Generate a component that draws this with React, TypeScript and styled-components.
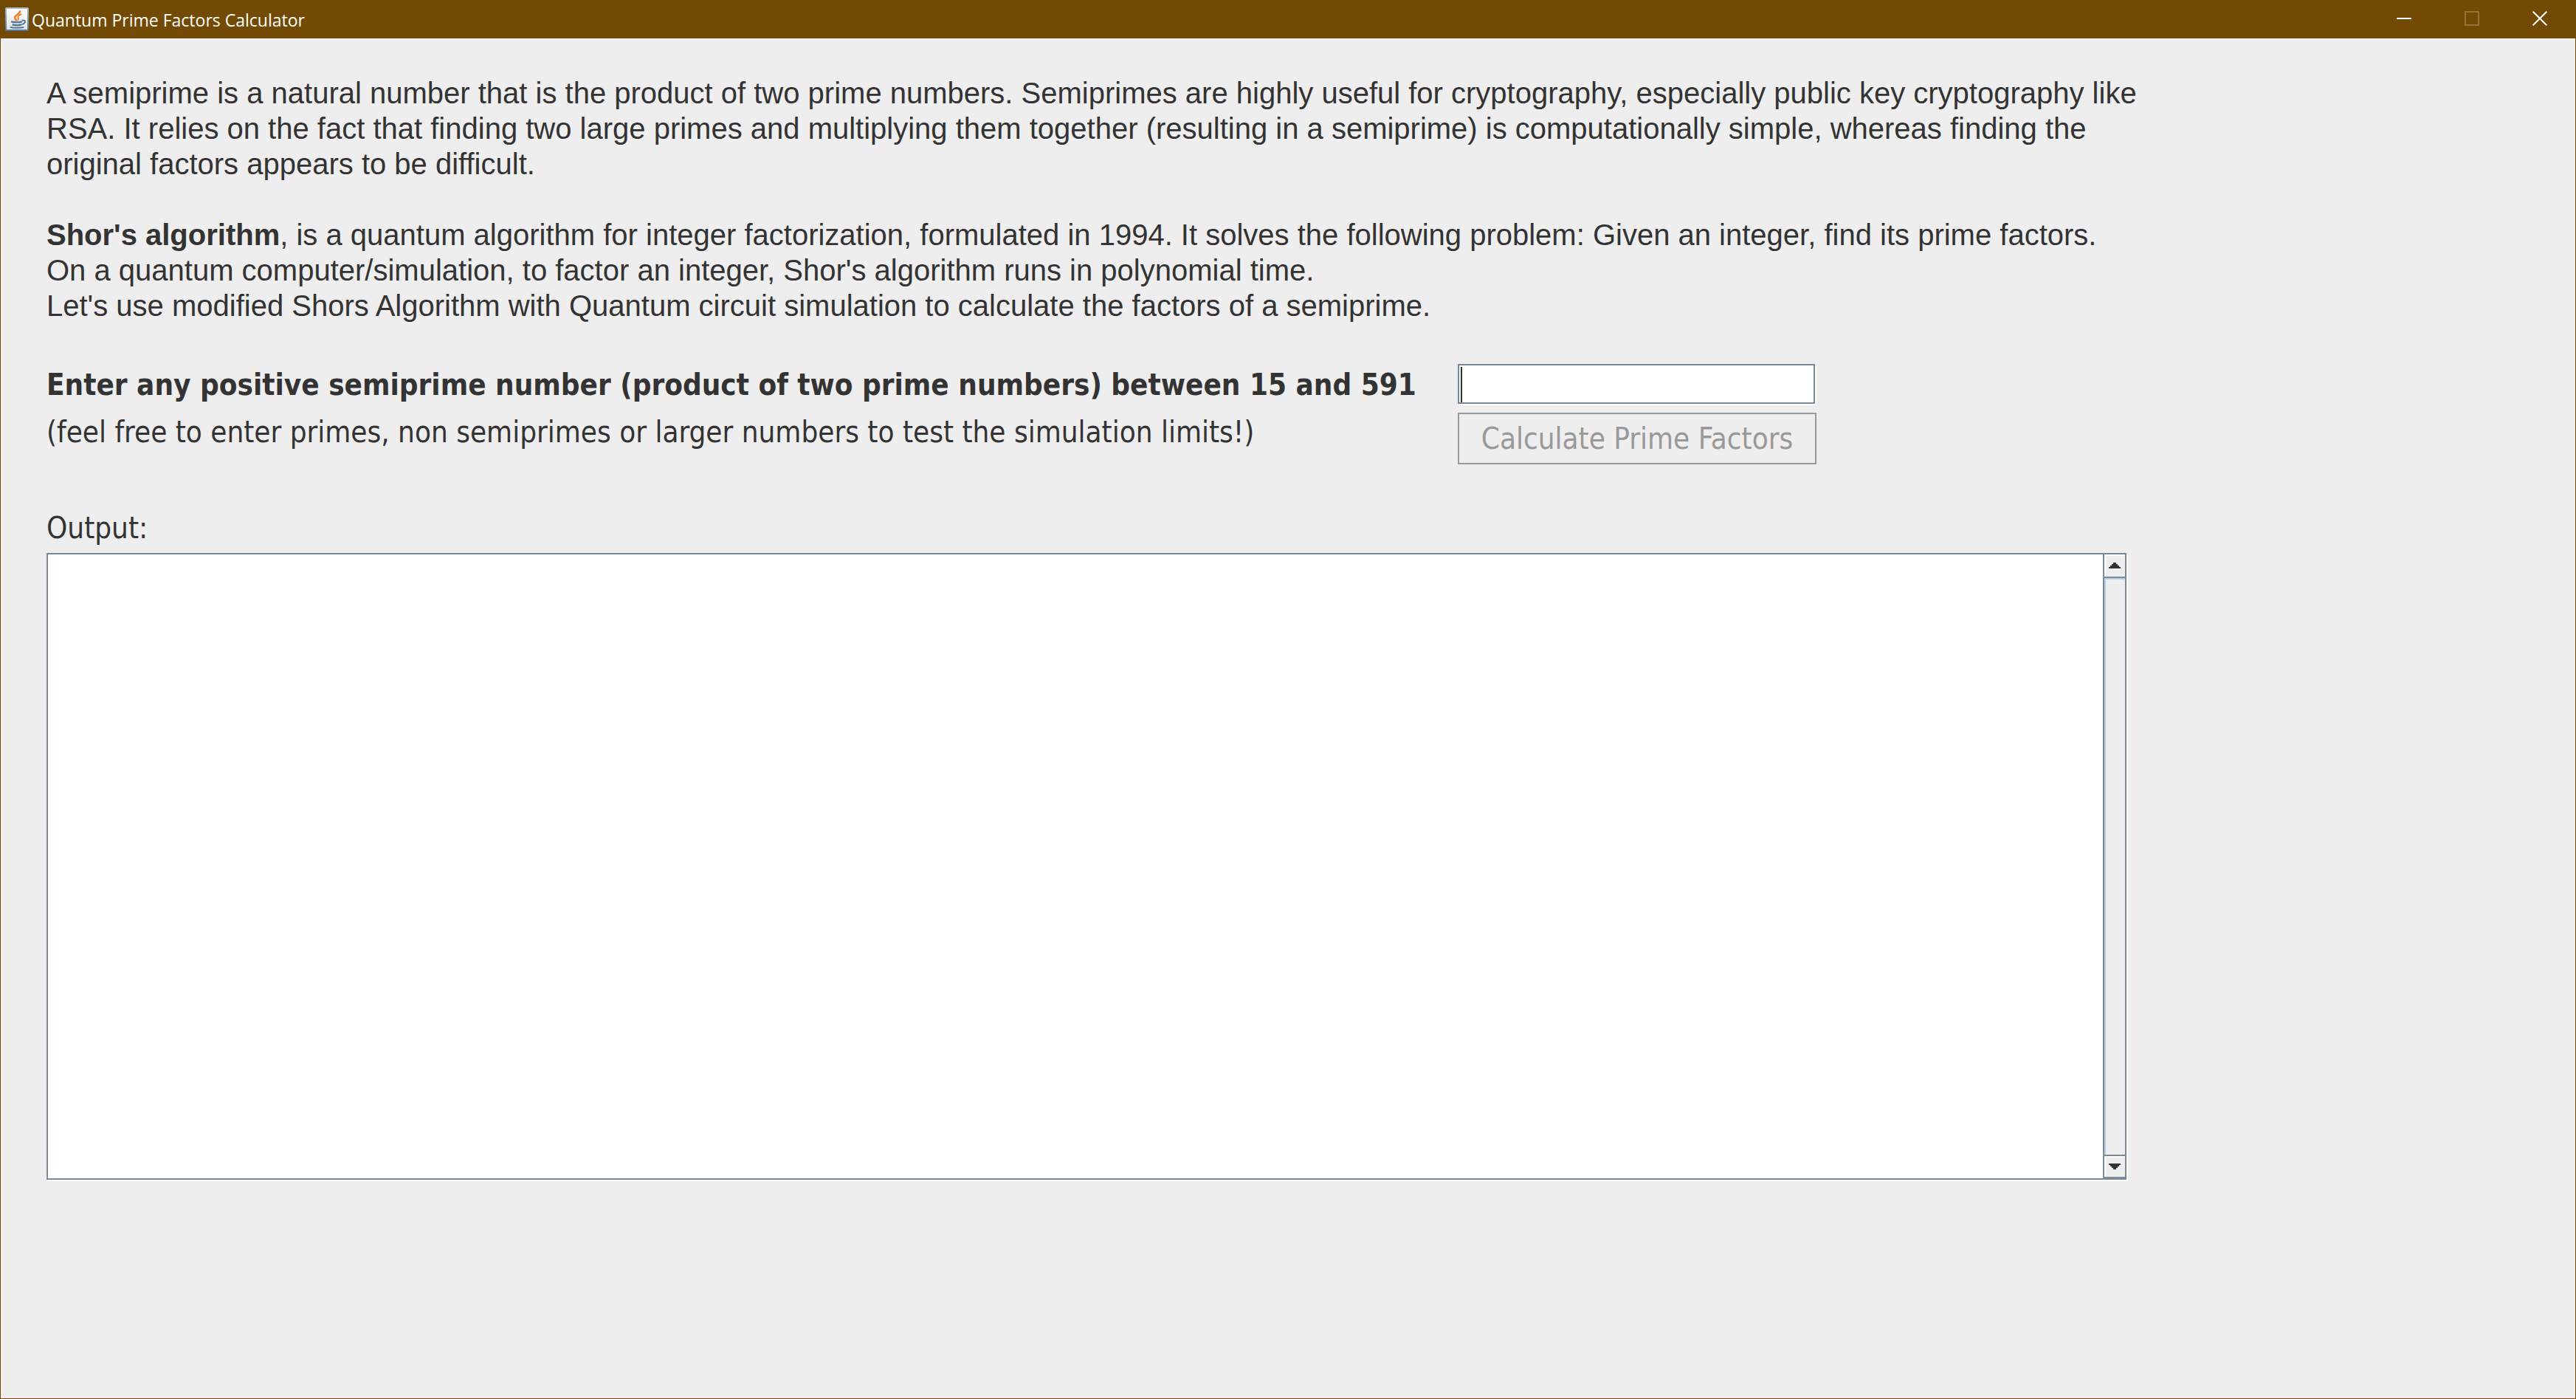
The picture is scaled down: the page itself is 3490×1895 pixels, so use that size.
import React, { useState } from "react";
import styled, { createGlobalStyle } from "styled-components";

const colors = {
  title: "#734a03",
  panel: "#eeeeee",
  text: "#333333",
  disabled: "#999999",
  border: "#7a8a99",
  light: "#b8cfe5",
};

const GlobalStyle = createGlobalStyle`
  *, *::before, *::after { box-sizing: border-box; }
  body { margin: 0; background: ${colors.panel}; }
`;

const Window = styled.div`
  display: flex;
  flex-direction: column;
  min-height: 100vh;
  border: 1px solid ${colors.title};
  border-top: 0;
  background: ${colors.panel};
  color: ${colors.text};
  font-family: "DejaVu Sans Condensed", "DejaVu Sans", sans-serif;
  font-size: 40px;
`;

const TitleBar = styled.header`
  display: flex;
  align-items: center;
  height: 52px;
  padding: 0 2px 0 6px;
  background: ${colors.title};
  color: #ffffff;
`;

const AppIcon = styled.svg`
  width: 32px;
  height: 32px;
  flex: none;
`;

const Title = styled.h1`
  flex: 1;
  margin: 0;
  padding: 2px 0 0 4px;
  font-family: "Open Sans", "Noto Sans", sans-serif;
  font-size: 23px;
  font-weight: 400;
  line-height: 32px;
`;

const WindowButton = styled.button`
  display: grid;
  place-items: center;
  width: 92px;
  height: 50px;
  margin-bottom: 2px;
  padding: 0;
  border: 0;
  background: transparent;
  color: #ffffff;

  &:disabled { color: #94713a; }
  svg { display: block; width: 20px; height: 20px; fill: none; stroke: currentColor; stroke-width: 2; }
`;

const Content = styled.main`
  display: flex;
  flex: 1;
  flex-direction: column;
  width: 100%;
  padding: 50px 62px 296px;
`;

const Intro = styled.section`
  font-family: "Liberation Sans", Arial, sans-serif;
  line-height: 48px;
`;

const Paragraph = styled.p`
  margin: 0 0 48px;
`;

const EntryForm = styled.form`
  display: grid;
  grid-template-columns: 1912px 486px;
  align-items: start;
  row-gap: 10px;
  margin-top: 7px;
`;

const PromptLabel = styled.label`
  font-weight: 700;
  line-height: 56px;
`;

const Hint = styled.p`
  margin: 0;
  line-height: 52px;
`;

const NumberInput = styled.input`
  width: 484px;
  height: 54px;
  padding: 0 4px;
  border: 2px solid ${colors.border};
  border-radius: 0;
  outline: 0;
  background: linear-gradient(${colors.text}, ${colors.text}) 2px 2px / 2px 48px no-repeat #ffffff;
  box-shadow: 2px 2px 0 #ffffff;
  color: ${colors.text};
  font: inherit;

  &:not(:placeholder-shown) { background: #ffffff; }
`;

const CalculateButton = styled.button`
  width: 486px;
  height: 70px;
  padding: 0;
  border: 2px solid ${colors.border};
  border-radius: 0;
  background: ${colors.panel};
  color: ${colors.text};
  font: inherit;
  line-height: 66px;

  &:disabled { border-color: ${colors.disabled}; color: ${colors.disabled}; }
`;

const OutputLabel = styled.label`
  margin-top: 58px;
  line-height: 56px;
`;

const ScrollPane = styled.div`
  display: flex;
  flex: 1;
  width: 100%;
  max-width: 2818px;
  min-height: 240px;
  margin-top: 6px;
  border: 2px solid ${colors.border};
  box-shadow: 2px 2px 0 #ffffff;
`;

const OutputArea = styled.textarea`
  flex: 1;
  min-width: 0;
  padding: 4px;
  border: 0;
  outline: 0;
  resize: none;
  overflow: hidden;
  background: #ffffff;
  color: ${colors.text};
  font: inherit;
`;

const ScrollBar = styled.div`
  display: flex;
  flex-direction: column;
  width: 30px;
  border-left: 2px solid ${colors.border};
`;

const ScrollTrack = styled.div`
  flex: 1;
  border-top: 2px solid ${colors.light};
  border-left: 2px solid ${colors.light};
`;

const ArrowButton = styled.button<{ $end?: boolean }>`
  display: grid;
  place-items: center;
  width: 28px;
  height: 32px;
  padding: 0;
  border: 0 solid ${colors.border};
  border-width: ${(p) => (p.$end ? "2px 0" : "0 0 2px")};
  background: ${colors.panel};
  box-shadow: inset 2px 2px 0 #ffffff;

  svg { display: block; width: 16px; height: 8px; fill: ${colors.text}; }
`;

function JavaIcon() {
  return (
    <AppIcon viewBox="0 0 32 32" aria-hidden="true">
      <defs>
        <linearGradient id="plate" x1="0" y1="0" x2="0" y2="1">
          <stop offset="0" stopColor="#ffffff" />
          <stop offset="1" stopColor="#e2e2e2" />
        </linearGradient>
        <linearGradient id="rim" x1="0" y1="0" x2="0" y2="1">
          <stop offset="0" stopColor="#a9bac6" />
          <stop offset="1" stopColor="#54779a" />
        </linearGradient>
      </defs>
      <rect x="1" y="1" width="30" height="30" rx="1" fill="url(#plate)" stroke="url(#rim)" strokeWidth="2" />
      <g fill="none" strokeLinecap="round">
        <path d="M20 5.500c0 3.500-7 5-7 8.500 0 1.500 1.500 2 2 3.500" stroke="#e8832f" strokeWidth="2.600" />
        <path d="M21.500 9.500c-3 1-4.500 2.500-4 4s1 2-.2 3.500" stroke="#e8832f" strokeWidth="2" />
        <path d="M9 19.500c3 .6 10 .6 13 0M10.500 23.500c3 .8 8 .8 10.500 0" stroke="#53789a" strokeWidth="2.400" />
        <path d="M23.500 17.500c5-.5 4.500 4-.5 5.500" stroke="#53789a" strokeWidth="2" />
        <path d="M7.500 27c4 1 13 1 17 0" stroke="#53789a" strokeWidth="2" />
      </g>
    </AppIcon>
  );
}

export default function App() {
  const [value, setValue] = useState("");

  return (
    <>
      <GlobalStyle />
      <Window>
        <TitleBar>
          <JavaIcon />
          <Title>Quantum Prime Factors Calculator</Title>
          <WindowButton type="button" aria-label="Minimize">
            <svg viewBox="0 0 20 20"><path d="M0 10h20" /></svg>
          </WindowButton>
          <WindowButton type="button" aria-label="Maximize" disabled>
            <svg viewBox="0 0 20 20"><path d="M1 1h18v18H1z" /></svg>
          </WindowButton>
          <WindowButton type="button" aria-label="Close">
            <svg viewBox="0 0 20 20"><path d="M.7.7l18.600 18.600M19.300.7L.7 19.300" /></svg>
          </WindowButton>
        </TitleBar>

        <Content>
          <Intro>
            <Paragraph>
              A semiprime is a natural number that is the product of two prime numbers. Semiprimes are highly useful for cryptography, especially public key cryptography like
              <br />
              RSA. It relies on the fact that finding two large primes and multiplying them together (resulting in a semiprime) is computationally simple, whereas finding the
              <br />
              original factors appears to be difficult.
            </Paragraph>
            <Paragraph>
              <strong>Shor's algorithm</strong>, is a quantum algorithm for integer factorization, formulated in 1994. It solves the following problem: Given an integer, find its prime factors.
              <br />
              On a quantum computer/simulation, to factor an integer, Shor's algorithm runs in polynomial time.
              <br />
              Let's use modified Shors Algorithm with Quantum circuit simulation to calculate the factors of a semiprime.
            </Paragraph>
          </Intro>

          <EntryForm onSubmit={(e) => e.preventDefault()}>
            <PromptLabel htmlFor="semiprime">
              Enter any positive semiprime number (product of two prime numbers) between 15 and 591
            </PromptLabel>
            <NumberInput
              id="semiprime"
              type="text"
              inputMode="numeric"
              placeholder=" "
              value={value}
              onChange={(e) => setValue(e.target.value)}
            />
            <Hint>(feel free to enter primes, non semiprimes or larger numbers to test the simulation limits!)</Hint>
            <CalculateButton type="submit" disabled={value === ""}>Calculate Prime Factors</CalculateButton>
          </EntryForm>

          <OutputLabel htmlFor="output">Output:</OutputLabel>
          <ScrollPane>
            <OutputArea id="output" readOnly />
            <ScrollBar>
              <ArrowButton type="button" aria-label="Scroll up">
                <svg viewBox="0 0 16 8" shapeRendering="crispEdges"><path d="M6 0h4v2h2v2h2v2h2v2H0V6h2V4h2V2h2z" /></svg>
              </ArrowButton>
              <ScrollTrack />
              <ArrowButton type="button" aria-label="Scroll down" $end>
                <svg viewBox="0 0 16 8" shapeRendering="crispEdges"><path d="M0 0h16v2h-2v2h-2v2h-2v2H6V6H4V4H2V2H0z" /></svg>
              </ArrowButton>
            </ScrollBar>
          </ScrollPane>
        </Content>
      </Window>
    </>
  );
}
